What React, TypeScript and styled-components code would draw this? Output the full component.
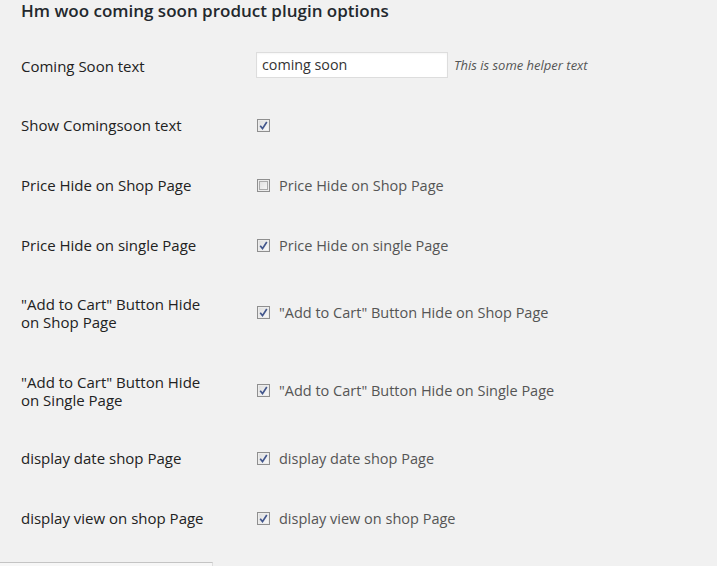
import React from "react";
import styled, { createGlobalStyle } from "styled-components";

const Global = createGlobalStyle`
  html, body { margin: 0; padding: 0; background: #f1f1f1; }
  body { font-family: "Open Sans", "Liberation Sans", sans-serif; }
`;

const Page = styled.div`
  width: 717px;
  height: 566px;
  overflow: hidden;
  background: #f1f1f1;
  position: relative;
`;

const Title = styled.h2`
  margin: 0;
  padding: 1px 0 0 21px;
  height: 34px;
  box-sizing: border-box;
  font-size: 17px;
  font-weight: 600;
  color: #23282d;
  line-height: 20px;
`;

const Table = styled.div`
  display: flex;
  flex-direction: column;
`;

const Row = styled.div<{ $h: number }>`
  display: grid;
  grid-template-columns: 256px 1fr;
  align-items: center;
  height: ${(p) => p.$h}px;
`;

const Label = styled.div<{ $drop?: number }>`
  padding-left: 21px;
  padding-top: ${(p) => (p.$drop || 0) * 2}px;
  font-size: 15px;
  line-height: 18px;
  color: #222;
  width: 200px;
`;

const Field = styled.div<{ $lift?: number }>`
  display: flex;
  align-items: center;
  margin-top: ${(p) => -(p.$lift || 0) * 2}px;
`;

const TextInput = styled.input`
  box-sizing: border-box;
  width: 192px;
  height: 26px;
  border: 1px solid #ddd;
  background: #fff;
  box-shadow: inset 0 1px 2px rgba(0, 0, 0, 0.04);
  padding: 0 5px;
  font-family: "Open Sans", "Liberation Sans", sans-serif;
  font-size: 14.3px;
  color: #333;
  margin: 0;
  outline: none;
`;

const Helper = styled.span`
  margin-left: 6px;
  font-size: 13px;
  font-style: italic;
  color: #555;
`;

const Box = styled.span`
  box-sizing: border-box;
  display: inline-flex;
  align-items: center;
  justify-content: center;
  width: 13px;
  height: 13px;
  margin-left: 1px;
  border: 1px solid #8f8f8f;
  background: linear-gradient(135deg, #dcdcdc, #fbfbfb);
  box-shadow: inset 0 0 0 1px #ececec;
`;

const Inner = styled.span`
  box-sizing: border-box;
  width: 9px;
  height: 9px;
  border: 1px solid #aaaaaa;
`;

const CheckLabel = styled.span`
  margin-left: 9px;
  font-size: 14.5px;
  color: #555;
`;

const BottomEdge = styled.div`
  position: absolute;
  left: 0;
  bottom: 0;
  width: 212px;
  height: 3px;
  border-top: 1px solid #c4c4c4;
  border-right: 1px solid #ddd;
  background: #f7f7f7;
`;

const Checkbox = ({ checked }: { checked: boolean }) => (
  <Box>
    {checked ? (
      <svg width="9" height="9" viewBox="0 0 9 9">
        <path d="M1.2 4.8 L3.5 7.6 L7.8 1" fill="none" stroke="#42568c" strokeWidth="1.7" />
      </svg>
    ) : (
      <Inner />
    )}
  </Box>
);

const rows: { label: React.ReactNode; text?: string; checked: boolean; h: number; lift?: number }[] = [
  { label: "Show Comingsoon text", checked: true, h: 60 },
  { label: "Price Hide on Shop Page", text: "Price Hide on Shop Page", checked: false, h: 60 },
  { label: "Price Hide on single Page", text: "Price Hide on single Page", checked: true, h: 60 },
  { label: <>"Add to Cart" Button Hide<br />on Shop Page</>, text: "\"Add to Cart\" Button Hide on Shop Page", checked: true, h: 76, lift: 1 },
  { label: <>"Add to Cart" Button Hide<br />on Single Page</>, text: "\"Add to Cart\" Button Hide on Single Page", checked: true, h: 80, lift: 1 },
  { label: "display date shop Page", text: "display date shop Page", checked: true, h: 54 },
  { label: "display view on shop Page", text: "display view on shop Page", checked: true, h: 66 },
];

export default function App() {
  return (
    <Page>
      <Global />
      <Title>Hm woo coming soon product plugin options</Title>
      <Table>
        <Row $h={61}>
          <Label $drop={1}>Coming Soon text</Label>
          <Field>
            <TextInput defaultValue="coming soon" />
            <Helper>This is some helper text</Helper>
          </Field>
        </Row>
        {rows.map((r, i) => (
          <Row key={i} $h={r.h}>
            <Label>{r.label}</Label>
            <Field $lift={r.lift}>
              <Checkbox checked={r.checked} />
              {r.text && <CheckLabel>{r.text}</CheckLabel>}
            </Field>
          </Row>
        ))}
      </Table>
      <BottomEdge />
    </Page>
  );
}
